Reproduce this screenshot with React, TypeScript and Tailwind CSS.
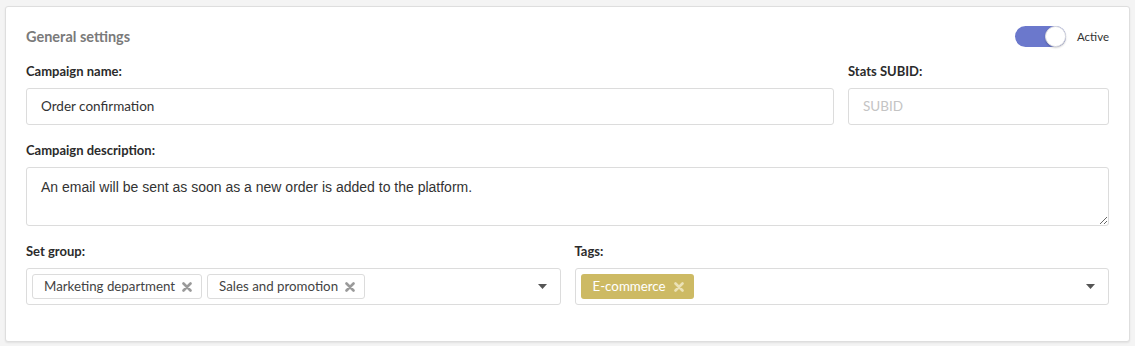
import * as React from 'react';

const font = { fontFamily: 'Lato, "Noto Sans", sans-serif' };

function XIcon({ color }: { color: string }) {
  return (
    <svg width="10" height="10" viewBox="0 0 10 10" className="shrink-0">
      <path d="M1.5 1.5l7 7M8.5 1.5l-7 7" stroke={color} strokeWidth="2.6" strokeLinecap="round" />
    </svg>
  );
}

function Chip({ label, gold }: { label: string; gold?: boolean }) {
  return (
    <span
      className={
        gold
          ? 'flex h-[25px] items-center gap-[8px] rounded-[3px] bg-[#cdba64] pl-[12px] pr-[10px] text-[13.3px] text-white'
          : 'flex h-[25px] items-center gap-[7px] rounded-[3px] border border-[#dcdcdc] bg-white pl-[11px] pr-[9px] text-[13.3px] text-[#444]'
      }
    >
      {label}
      <XIcon color={gold ? '#ebe2b6' : '#9a9a9a'} />
    </span>
  );
}

function Caret() {
  return (
    <svg width="9" height="5" viewBox="0 0 9 5" className="shrink-0">
      <path d="M0 0h9L4.5 5z" fill="#555" />
    </svg>
  );
}

function MultiSelect({ children }: { children?: React.ReactNode }) {
  return (
    <div className="flex h-[37px] items-center rounded-[3px] border border-[#dcdcdc] bg-white pl-[5px] pr-[13px]">
      <div className="flex flex-1 gap-[5px]">{children}</div>
      <Caret />
    </div>
  );
}

function Label({ children }: { children: React.ReactNode }) {
  return <div className="mb-[8px] h-[18px] text-[13px] leading-[18px] font-bold text-[#2b2b2b]">{children}</div>;
}

export default function App() {
  return (
    <div className="min-h-[346px] bg-[#f4f4f4] pt-[6px] pl-[5px] pr-[5px] pb-[5px]" style={font}>
      <div className="w-[1125px] rounded-[3px] border border-[#dedede] bg-white px-[20px] pt-[19px] pb-[36px] shadow-[0_1px_2px_rgba(0,0,0,0.08)]">
        <div className="flex h-[21px] items-center justify-between">
          <div className="text-[14.5px] font-bold text-[#7a7a7a]">General settings</div>
          <div className="flex items-center gap-[11px]">
            <div className="flex h-[21px] w-[51px] items-center justify-end rounded-full bg-[#6b78cc]">
              <div className="h-[21px] w-[21px] rounded-full border border-[#e2e2e2] bg-white shadow-[0_1px_2px_rgba(0,0,0,0.2)]" />
            </div>
            <span className="text-[11.5px] text-[#333]">Active</span>
          </div>
        </div>

        <div className="mt-[15px] flex gap-[14px]">
          <div className="flex-1">
            <Label>Campaign name:</Label>
            <div className="flex h-[37px] items-center rounded-[3px] border border-[#dcdcdc] px-[14px] text-[13.5px] text-[#333]">
              Order confirmation
            </div>
          </div>
          <div className="w-[261px]">
            <Label>Stats SUBID:</Label>
            <div className="flex h-[37px] items-center rounded-[3px] border border-[#dcdcdc] px-[14px] text-[13.5px] text-[#c4c4c4]">
              SUBID
            </div>
          </div>
        </div>

        <div className="mt-[16px]">
          <Label>Campaign description:</Label>
          <textarea
            readOnly
            className="block h-[59px] w-full rounded-[3px] border border-[#dcdcdc] px-[14px] pt-[9px] text-[14px] text-[#333] outline-none"
            style={{ fontFamily: '"Liberation Sans", Arial, sans-serif' }}
            defaultValue="An email will be sent as soon as a new order is added to the platform."
          />
        </div>

        <div className="mt-[16px] flex gap-[14px]">
          <div className="flex-1">
            <Label>Set group:</Label>
            <MultiSelect>
              <Chip label="Marketing department" />
              <Chip label="Sales and promotion" />
            </MultiSelect>
          </div>
          <div className="flex-1">
            <Label>Tags:</Label>
            <MultiSelect>
              <Chip label="E-commerce" gold />
            </MultiSelect>
          </div>
        </div>
      </div>
    </div>
  );
}
